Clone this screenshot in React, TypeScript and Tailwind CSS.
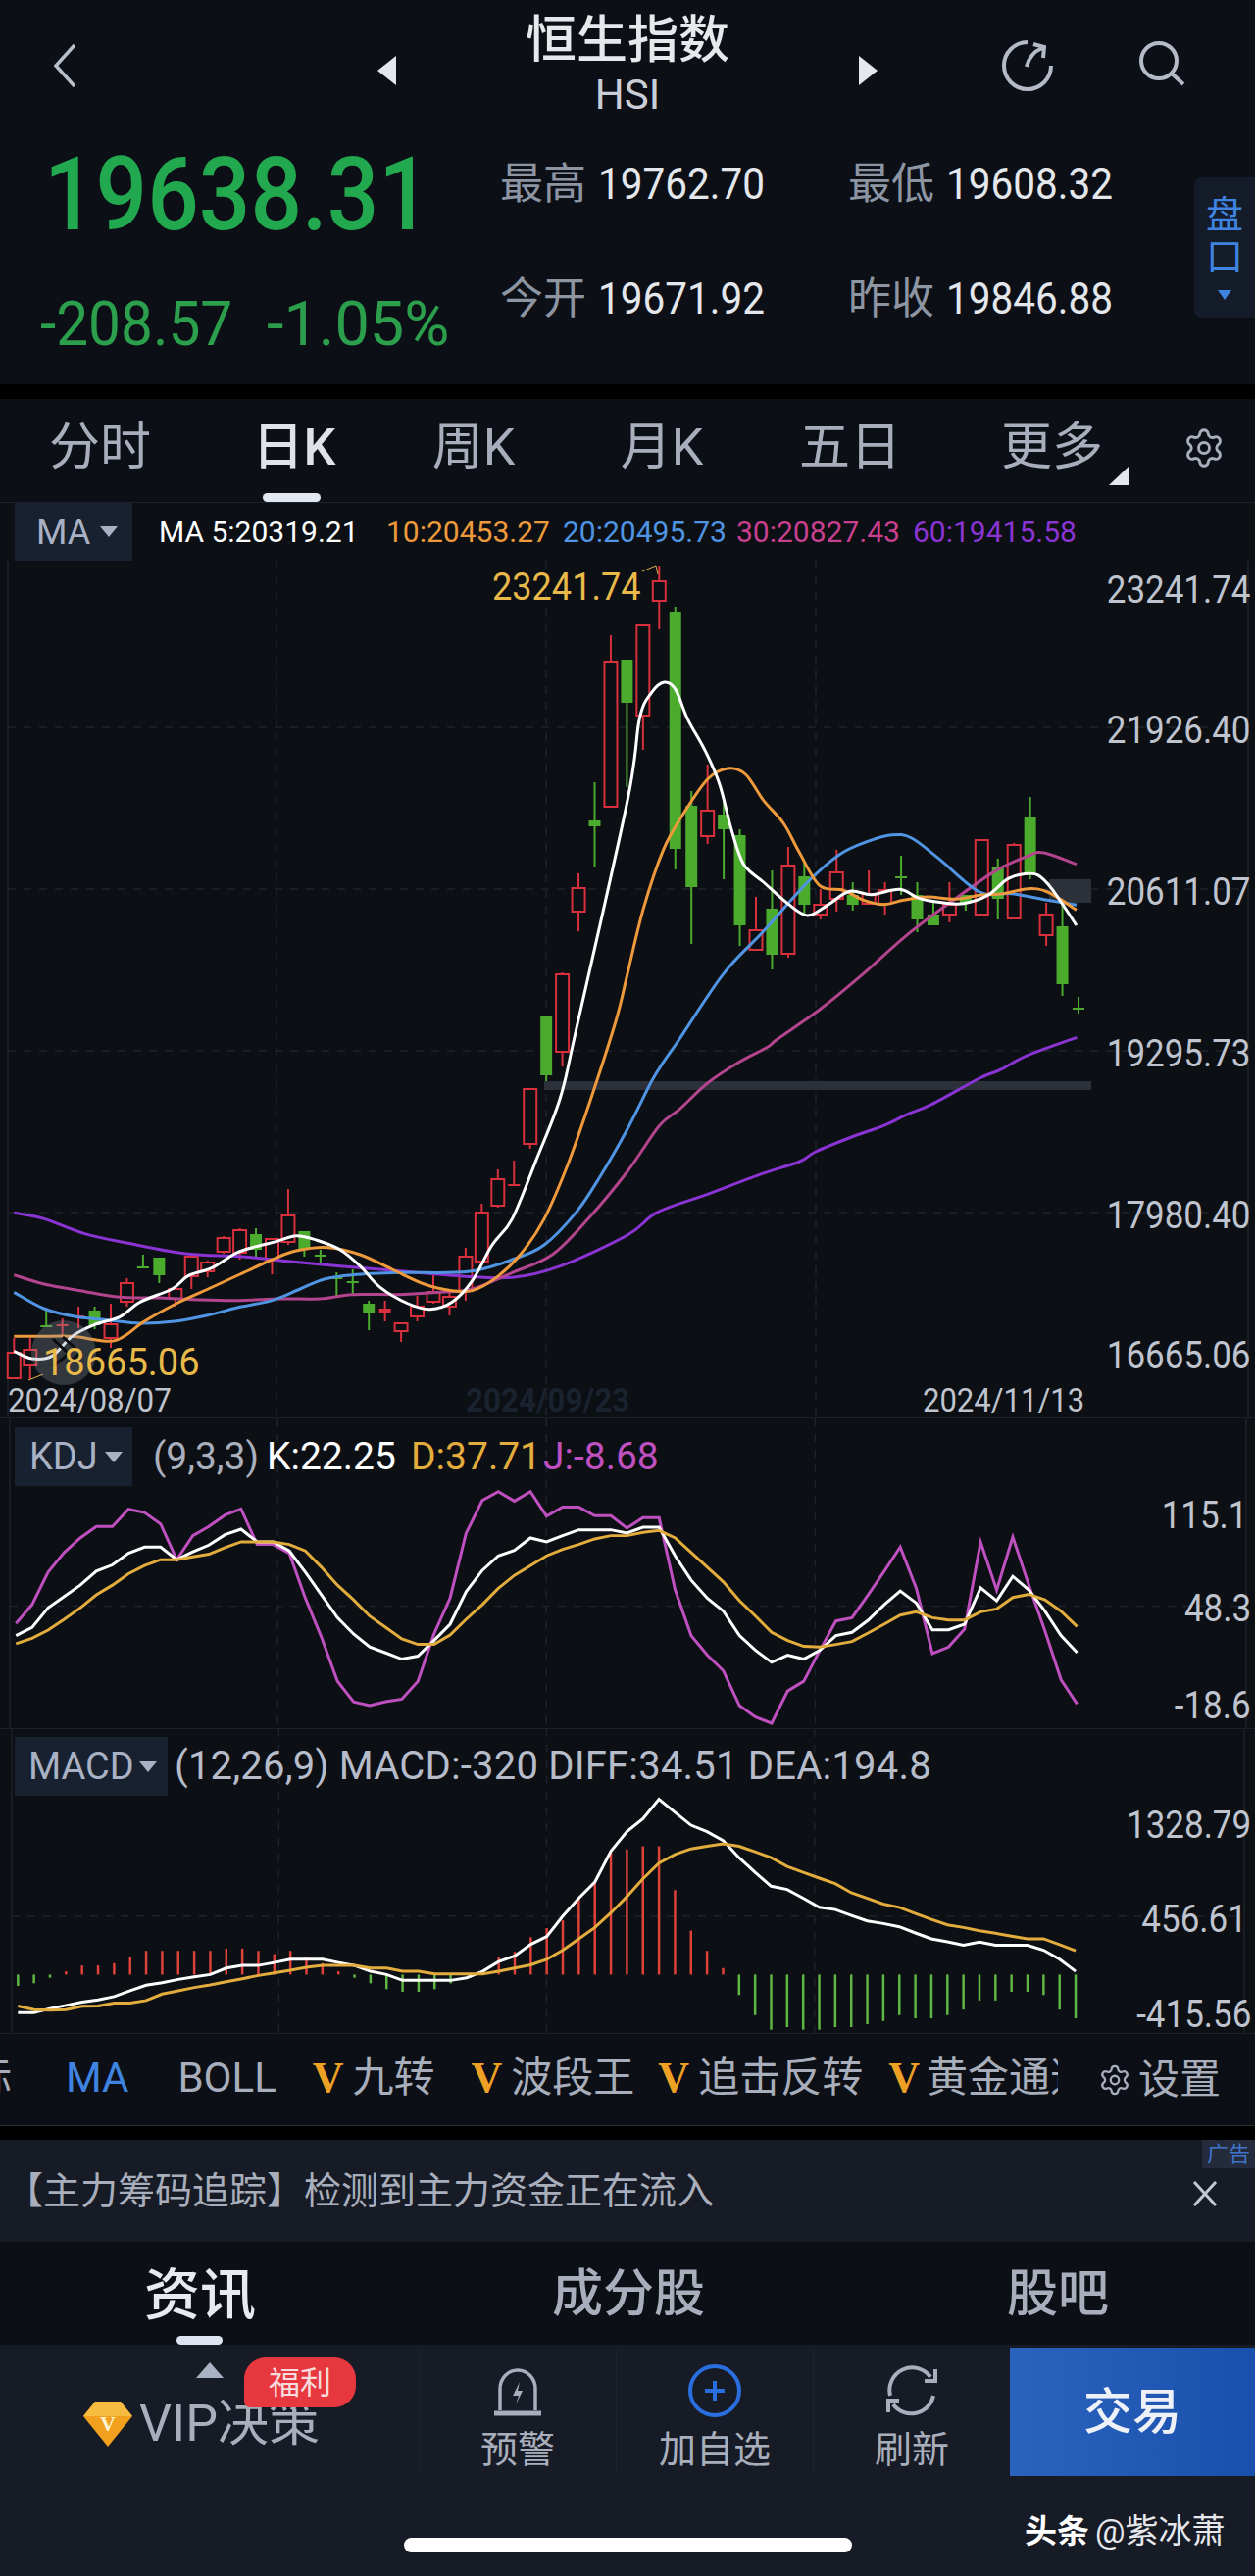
import { Settings } from 'lucide-react';

type P = [number, number];

const z3 = (a: number[]): P[] => pairs(a).map(([x, y]) => [640 + x / 2.45, 560 + y / 3]);
const z4 = (a: number[]): P[] => pairs(a).map(([x, y]) => [x / 2.45, 1040 + y / 3]);
const z5 = (a: number[]): P[] => pairs(a).map(([x, y]) => [640 + x / 2.45, 1040 + y / 3]);

function pairs(a: number[]): P[] {
  const out: P[] = [];
  for (let i = 0; i < a.length; i += 2) out.push([a[i], a[i + 1]]);
  return out;
}

const barX = (i: number) => 14.3 + 16.45 * i;

// catmull-rom through the traced points, the moving averages are smooth
function smooth(pts: P[]) {
  let d = `M${pts[0][0]} ${pts[0][1]}`;
  for (let i = 0; i < pts.length - 1; i++) {
    const p0 = pts[Math.max(i - 1, 0)];
    const p1 = pts[i];
    const p2 = pts[i + 1];
    const p3 = pts[Math.min(i + 2, pts.length - 1)];
    const c1x = p1[0] + (p2[0] - p0[0]) / 6;
    const c1y = p1[1] + (p2[1] - p0[1]) / 6;
    const c2x = p2[0] - (p3[0] - p1[0]) / 6;
    const c2y = p2[1] - (p3[1] - p1[1]) / 6;
    d += ` C${c1x} ${c1y} ${c2x} ${c2y} ${p2[0]} ${p2[1]}`;
  }
  return d;
}

const ma5 = [
  ...z4([35, 1015, 80, 1038, 130, 1030, 180, 970, 235, 935, 300, 910, 350, 865, 430, 825, 470, 785, 530, 760, 590, 715, 640, 695, 690, 680, 740, 662, 790, 675, 850, 705, 900, 755, 950, 820, 1020, 870, 1075, 887, 1130, 865, 1180, 800, 1230, 690, 1280, 610, 1340, 430, 1400, 240, 1440, 30]),
  ...z3([0, 770, 30, 520, 60, 440, 92, 408, 120, 430, 150, 520, 195, 620, 230, 720, 260, 860, 290, 965, 340, 1020, 400, 1085, 450, 1122, 500, 1090, 555, 1048, 610, 1058, 680, 1042, 730, 1070, 790, 1083, 840, 1085, 900, 1060, 950, 1010, 990, 995, 1025, 998, 1060, 1040, 1122, 1152]),
];
const ma10 = [
  ...z4([35, 970, 100, 970, 180, 970, 270, 985, 310, 970, 360, 925, 440, 870, 520, 825, 600, 780, 680, 735, 740, 708, 820, 698, 900, 720, 980, 765, 1060, 810, 1130, 830, 1180, 830, 1240, 790, 1300, 720, 1360, 610, 1420, 440, 1480, 230, 1540, 0]),
  ...z3([0, 1300, 40, 1100, 90, 920, 140, 810, 200, 705, 250, 672, 295, 690, 340, 770, 390, 840, 430, 930, 480, 1030, 540, 1045, 590, 1075, 640, 1088, 690, 1075, 750, 1065, 820, 1072, 880, 1060, 940, 1055, 1000, 1040, 1050, 1050, 1122, 1105]),
];
const ma20 = [
  ...z4([35, 835, 110, 885, 190, 910, 270, 920, 350, 930, 430, 925, 520, 905, 600, 880, 680, 860, 750, 825, 810, 795, 880, 782, 1000, 775, 1170, 772, 1280, 735, 1360, 690, 1440, 590, 1500, 480, 1568, 335]),
  ...z5([60, 190, 90, 130]),
  ...z3([130, 1500, 240, 1300, 340, 1170, 450, 1020, 530, 935, 600, 895, 660, 875, 710, 885, 780, 950, 880, 1050, 960, 1055, 1050, 1075, 1122, 1090]),
];
const ma30 = [
  ...z4([35, 782, 110, 810, 200, 830, 300, 850, 400, 852, 500, 858, 600, 860, 700, 855, 800, 855, 880, 842, 1000, 842, 1100, 835, 1180, 825, 1280, 775, 1380, 720, 1470, 610, 1568, 465]),
  ...z5([80, 325, 130, 275, 200, 195, 280, 130, 350, 85]),
  ...z3([375, 1500, 480, 1410, 580, 1310, 700, 1180, 820, 1070, 920, 985, 1000, 940, 1040, 930, 1122, 965]),
];
const ma60 = [
  ...z4([35, 592, 110, 610, 210, 655, 320, 685, 470, 718, 600, 725, 720, 740, 850, 755, 1000, 770, 1150, 785, 1280, 790, 1400, 755, 1568, 660]),
  ...z5([75, 590, 200, 535, 330, 475, 430, 435, 470, 405, 560, 360, 640, 325, 700, 290, 760, 260, 880, 180, 930, 155, 1000, 110, 1123, 55]),
];

// top, bottom, wick top, wick bottom, kind: r hollow red, R solid red, g solid green
const candles: [number, number, number, number, string][] = [
  [1380, 1406, 1365, 1406, 'r'], [1377, 1393, 1365, 1407, 'r'], [1352, 1354, 1335, 1354, 'g'], [1351, 1353, 1345, 1365, 'R'],
  [1342, 1344, 1333, 1355, 'R'], [1337, 1352, 1333, 1356, 'g'], [1351, 1365, 1330, 1375, 'r'], [1309, 1328, 1304, 1333, 'r'],
  [1292, 1294, 1280, 1294, 'g'], [1283, 1301, 1283, 1309, 'g'], [1315, 1325, 1313, 1333, 'r'], [1282, 1302, 1282, 1315, 'r'],
  [1288, 1297, 1286, 1303, 'r'], [1263, 1277, 1261, 1279, 'r'], [1255, 1278, 1253, 1285, 'r'], [1259, 1275, 1253, 1282, 'g'],
  [1264, 1285, 1263, 1300, 'r'], [1240, 1267, 1213, 1270, 'r'], [1256, 1275, 1256, 1282, 'g'], [1280, 1282, 1275, 1290, 'g'],
  [1303, 1305, 1298, 1322, 'g'], [1307, 1309, 1295, 1322, 'g'], [1330, 1339, 1327, 1357, 'g'], [1335, 1340, 1327, 1348, 'R'],
  [1350, 1358, 1350, 1369, 'r'], [1333, 1343, 1322, 1348, 'r'], [1318, 1328, 1300, 1330, 'r'], [1323, 1333, 1317, 1342, 'r'],
  [1282, 1317, 1273, 1327, 'r'], [1237, 1287, 1228, 1290, 'r'], [1203, 1230, 1193, 1232, 'r'], [1208, 1210, 1184, 1210, 'R'],
  [1111, 1167, 1111, 1172, 'r'], [1037, 1097, 1037, 1103, 'g'], [994, 1073, 992, 1088, 'r'], [906, 930, 891, 950, 'r'],
  [837, 843, 798, 885, 'g'], [675, 823, 648, 823, 'r'], [673, 717, 673, 803, 'g'], [638, 730, 638, 765, 'r'],
  [593, 613, 577, 642, 'r'], [624, 866, 619, 887, 'g'], [822, 905, 807, 963, 'g'], [827, 853, 780, 861, 'r'],
  [831, 846, 817, 897, 'g'], [852, 944, 846, 965, 'g'], [949, 969, 915, 969, 'r'], [927, 974, 888, 989, 'g'],
  [883, 973, 864, 977, 'r'], [894, 923, 879, 932, 'g'], [923, 933, 907, 938, 'r'], [890, 917, 867, 930, 'r'],
  [913, 923, 900, 929, 'g'], [912, 922, 888, 922, 'r'], [908, 922, 900, 933, 'r'], [894, 896, 873, 913, 'g'],
  [913, 938, 900, 951, 'g'], [933, 944, 918, 944, 'g'], [923, 933, 900, 941, 'r'], [913, 921, 913, 929, 'g'],
  [857, 933, 857, 933, 'r'], [885, 917, 876, 938, 'g'], [862, 937, 860, 938, 'r'], [834, 893, 813, 897, 'g'],
  [933, 954, 921, 965, 'r'], [945, 1004, 922, 1016, 'g'], [1028, 1030, 1017, 1034, 'g'],
];

const kdjJ = [648, 590, 490, 430, 385, 350, 350, 297, 307, 342, 452, 378, 350, 315, 296, 405, 405, 432, 570, 690, 825, 888, 900, 888, 880, 825, 680, 570, 370, 270, 243, 272, 243, 318, 290, 290, 317, 317, 355, 323, 323, 545, 685, 745, 793, 900, 935, 954, 855, 825, 730, 640, 630, 560, 488, 413, 540, 740, 720, 665, 398, 545, 382, 530, 670, 820, 895];
const kdjK = [685, 660, 600, 565, 530, 487, 468, 432, 413, 413, 452, 428, 407, 375, 358, 397, 397, 425, 490, 560, 630, 680, 720, 738, 757, 748, 700, 650, 550, 485, 440, 423, 385, 397, 378, 360, 360, 360, 370, 352, 352, 440, 515, 570, 610, 685, 730, 767, 745, 757, 730, 685, 675, 638, 590, 548, 585, 667, 667, 650, 538, 578, 503, 545, 610, 685, 737];
const kdjD = [710, 693, 668, 635, 600, 560, 530, 495, 470, 452, 452, 443, 435, 415, 397, 397, 397, 405, 425, 475, 530, 575, 625, 660, 695, 712, 712, 683, 635, 590, 540, 500, 470, 440, 420, 405, 388, 378, 378, 368, 362, 385, 430, 475, 520, 578, 625, 675, 700, 718, 720, 712, 703, 677, 650, 622, 612, 630, 637, 637, 612, 603, 568, 558, 575, 610, 657];
const diff = [942, 942, 930, 920, 910, 903, 893, 875, 858, 850, 840, 832, 825, 805, 797, 797, 788, 778, 778, 778, 788, 797, 815, 825, 843, 843, 843, 843, 835, 815, 785, 768, 732, 708, 645, 590, 540, 445, 385, 345, 285, 325, 365, 385, 412, 465, 510, 553, 563, 590, 618, 625, 643, 660, 668, 678, 697, 715, 724, 735, 725, 735, 735, 735, 750, 778, 815];
const dea = [922, 933, 935, 933, 923, 922, 913, 913, 905, 885, 875, 865, 857, 847, 838, 828, 820, 812, 803, 797, 797, 797, 805, 805, 815, 815, 823, 823, 823, 823, 815, 805, 795, 778, 750, 715, 680, 635, 585, 530, 482, 455, 438, 430, 422, 430, 447, 465, 492, 510, 528, 545, 573, 590, 608, 618, 637, 655, 672, 680, 690, 698, 707, 715, 715, 733, 752];
const hist = [860, 852, 835, 815, 797, 797, 790, 772, 752, 752, 752, 752, 752, 745, 745, 752, 762, 752, 772, 790, 815, 835, 852, 870, 878, 878, 870, 852, 825, 825, 772, 755, 710, 682, 658, 590, 540, 450, 440, 430, 430, 565, 690, 752, 805, 888, 950, 995, 987, 995, 995, 987, 987, 978, 968, 950, 960, 960, 950, 933, 905, 905, 878, 878, 888, 933, 960];

const kdjPts = (a: number[]) => a.map((v, i) => `${barX(i)},${1440 + v / 3}`).join(' ');
const macdPts = (a: number[]) => a.map((v, i) => `${barX(i)},${1740 + v / 3}`).join(' ');

function Grid({ ys, top, bottom }: { ys: number[]; top: number; bottom: number }) {
  return (
    <g stroke="#1e232b" strokeWidth="1.5">
      <line x1="8" y1={top} x2="8" y2={bottom} />
      <line x1="1273" y1={top} x2="1273" y2={bottom} />
      {ys.map((y) => (
        <line key={y} x1="8" y1={y} x2="1273" y2={y} strokeDasharray="8 8" />
      ))}
      {[282, 557, 832].map((x) => (
        <line key={x} x1={x} y1={top} x2={x} y2={bottom} strokeDasharray="8 8" />
      ))}
    </g>
  );
}

function MainChart() {
  return (
    <svg className="absolute inset-0 h-full w-full" viewBox="0 572 1280 874">
      <Grid ys={[742, 907, 1072, 1237]} top={572} bottom={1446} />
      <rect x="555" y="1103" width="558" height="9" fill="#2b3039" />
      <rect x="1070" y="897" width="43" height="24" fill="#2b3039" />
      {candles.map(([t, b, wt, wb, k], i) => {
        const x = barX(i);
        const c = k === 'g' ? '#4bab2c' : '#d8303c';
        return (
          <g key={i}>
            <line x1={x} y1={wt} x2={x} y2={wb} stroke={c} strokeWidth="2" />
            {k === 'r' ? (
              <rect x={x - 6.5} y={t} width="13" height={b - t} fill="#0c0f14" stroke={c} strokeWidth="2" />
            ) : (
              <rect x={x - 6} y={t} width="12" height={b - t} fill={c} />
            )}
          </g>
        );
      })}
      <path d={smooth(ma60)} fill="none" stroke="#8b34d4" strokeWidth="3" />
      <path d={smooth(ma30)} fill="none" stroke="#b3458f" strokeWidth="3" />
      <path d={smooth(ma20)} fill="none" stroke="#4f95e3" strokeWidth="3" />
      <path d={smooth(ma10)} fill="none" stroke="#ee9a3c" strokeWidth="3" />
      <path d={smooth(ma5)} fill="none" stroke="#ffffff" strokeWidth="3" />
      <polyline points="655,583 669,577 671,586" fill="none" stroke="#e5b04a" strokeWidth="1" />
      <polyline points="29,1408 44,1402" fill="none" stroke="#e5b04a" strokeWidth="1" />
      <circle cx="65" cy="1380" r="33" fill="#8a94a3" fillOpacity="0.3" />
      <path d="M54 1366 L70 1381 L54 1394 M64 1364 L82 1380 L68 1392" fill="none" stroke="#0b0d11" strokeWidth="3" />
    </svg>
  );
}

function KdjChart() {
  return (
    <svg className="absolute inset-0 h-full w-full" viewBox="0 1446 1280 317">
      <Grid ys={[1638]} top={1446} bottom={1763} />
      <polyline points={kdjPts(kdjJ)} fill="none" stroke="#bf50c0" strokeWidth="3" />
      <polyline points={kdjPts(kdjK)} fill="none" stroke="#ffffff" strokeWidth="3" />
      <polyline points={kdjPts(kdjD)} fill="none" stroke="#e3ad3e" strokeWidth="3" />
    </svg>
  );
}

function MacdChart() {
  return (
    <svg className="absolute inset-0 h-full w-full" viewBox="0 1763 1280 312">
      <Grid ys={[1955]} top={1763} bottom={2075} />
      {hist.map((v, i) => (
        <line
          key={i}
          x1={barX(i)}
          x2={barX(i)}
          y1={2015}
          y2={1740 + v / 3}
          stroke={v > 825 ? '#5fb744' : '#df4238'}
          strokeWidth="2.5"
        />
      ))}
      <polyline points={macdPts(diff)} fill="none" stroke="#ffffff" strokeWidth="3" />
      <polyline points={macdPts(dea)} fill="none" stroke="#e3ad3e" strokeWidth="3" />
    </svg>
  );
}

function Caret({ className }: { className: string }) {
  return <span className={`block h-0 w-0 border-x-[9px] border-t-[11px] border-x-transparent border-t-[#a9b2c4] ${className}`} />;
}

function GoldV({ className }: { className: string }) {
  return <span className={`font-['Liberation_Serif',serif] text-[44px] font-bold leading-none text-[#efa126] ${className}`}>V</span>;
}

export default function App() {
  return (
    <div className="flex h-[2628px] w-[1280px] flex-col overflow-hidden bg-black font-[Roboto,'Noto_Sans_CJK_SC',sans-serif]">
      {/* Quote header */}
      <header className="flex h-[392px] shrink-0 flex-col bg-[#0c1016]">
        <div className="flex h-[126px] shrink-0">
          <div className="w-[385px] pl-[53px] pt-[44px]">
            <svg width="26" height="46" viewBox="0 0 26 46" fill="none" stroke="#b9bfca" strokeWidth="3.5">
              <path d="M23 2 L4 23 L23 44" />
            </svg>
          </div>
          <span className="mt-[57px] h-0 w-0 border-y-[15px] border-r-[19px] border-y-transparent border-r-[#e4e8ee]" />
          <div className="flex w-[472px] flex-col items-center pt-[13px]">
            <span className="text-[52px] font-medium leading-[58px] text-[#e6e8ec]">恒生指数</span>
            <span className="mt-[7px] text-[42px] leading-[38px] text-[#c9ced8]">HSI</span>
          </div>
          <span className="mt-[57px] h-0 w-0 border-y-[15px] border-l-[19px] border-y-transparent border-l-[#e4e8ee]" />
          <svg className="ml-[126px] mt-[40px]" width="54" height="54" viewBox="0 0 54 54" fill="none" stroke="#b4bac6" strokeWidth="4">
            <path d="M27 3 A24 24 0 1 0 51 27" />
            <path d="M26 28 C28 20 32 13 42 9" />
            <path d="M33 5 L44 8 L43 19" />
          </svg>
          <svg className="ml-[85px] mt-[42px]" width="50" height="46" viewBox="0 0 50 46" fill="none" stroke="#b4bac6" strokeWidth="4">
            <circle cx="22" cy="20" r="18" />
            <path d="M35 33 L47 44" />
          </svg>
        </div>
        <div className="relative flex">
          <div className="w-[510px] shrink-0 pl-[41px]">
            <span className="ml-[4px] mt-[21px] block origin-left scale-x-[0.89] text-[104px] font-medium leading-[104px] text-[#22a94f]">19638.31</span>
            <div className="mt-[48px] flex text-[63px] leading-[63px] text-[#2b9f4c]">
              <span className="w-[231px] origin-left scale-x-[0.93]">-208.57</span>
              <span className="origin-left">-1.05%</span>
            </div>
          </div>
          <div className="grid grid-cols-[355px_1fr] content-start gap-y-[73px] pt-[40px] text-[#8d95a3]">
            <div className="flex h-[44px] items-center">
              <span className="w-[100px] text-[44px]">最高</span>
              <span className="origin-left scale-x-[0.92] text-[44px] text-[#e4e7ec]">19762.70</span>
            </div>
            <div className="flex h-[44px] items-center">
              <span className="w-[100px] text-[44px]">最低</span>
              <span className="origin-left scale-x-[0.92] text-[44px] text-[#e4e7ec]">19608.32</span>
            </div>
            <div className="flex h-[44px] items-center">
              <span className="w-[100px] text-[44px]">今开</span>
              <span className="origin-left scale-x-[0.92] text-[44px] text-[#e4e7ec]">19671.92</span>
            </div>
            <div className="flex h-[44px] items-center">
              <span className="w-[100px] text-[44px]">昨收</span>
              <span className="origin-left scale-x-[0.92] text-[44px] text-[#e4e7ec]">19846.88</span>
            </div>
          </div>
          <div className="absolute right-0 top-[55px] flex h-[143px] w-[62px] flex-col items-center rounded-l-[8px] bg-[#141b29] pt-[17px] text-[38px] leading-[43px] text-[#3f84e0]">
            <span>盘</span>
            <span>口</span>
            <span className="mt-[12px] h-0 w-0 border-x-[7px] border-t-[10px] border-x-transparent border-t-[#3f84e0]" />
          </div>
        </div>
      </header>
      <div className="h-[15px] shrink-0 bg-black" />

      {/* Period tabs */}
      <nav className="relative flex h-[105px] shrink-0 items-center bg-[#0c1016] pb-[5px] pl-[2px] text-[52px] leading-none text-[#a8aebb]">
        <span className="w-[200px] text-center">分时</span>
        <span className="w-[196px] text-center font-medium text-[#dfe2e8]">日K</span>
        <span className="w-[170px] text-center">周K</span>
        <span className="w-[214px] text-center">月K</span>
        <span className="w-[170px] text-center">五日</span>
        <span className="w-[242px] text-center">更多</span>
        <Settings className="ml-[12px] text-[#a8aebb]" size={44} strokeWidth={1.6} />
        <span className="absolute left-[1131px] top-[69px] h-0 w-0 border-b-[19px] border-l-[20px] border-b-[#e4e8ee] border-l-transparent" />
        <span className="absolute bottom-0 left-[268px] h-[9px] w-[59px] rounded-full bg-[#e3e7f0]" />
      </nav>

      {/* MA legend */}
      <div className="relative flex h-[60px] shrink-0 items-center border-t border-[#1c2129] bg-[#0c0f14] text-[30px] leading-none">
        <div className="ml-[15px] flex h-[60px] w-[120px] shrink-0 items-center bg-[#18212f] pl-[22px] text-[36px] text-[#a9b2c4]">
          <span>MA</span>
          <Caret className="ml-[10px]" />
        </div>
        <span className="ml-[27px] w-[232px] text-white">MA 5:20319.21</span>
        <span className="w-[180px] text-[#ee9a3c]">10:20453.27</span>
        <span className="w-[177px] text-[#4f95e3]">20:20495.73</span>
        <span className="w-[180px] text-[#c8408f]">30:20827.43</span>
        <span className="text-[#8b34d4]">60:19415.58</span>
      </div>

      {/* Candles */}
      <section className="relative h-[874px] shrink-0 bg-[#0c0f14] text-[38px] leading-none text-[#bfc4cf]">
        <MainChart />
        <span className="absolute left-[502px] top-[8px] origin-left scale-x-[0.95] text-[#e9b949]">23241.74</span>
        <span className="absolute left-[44px] top-[799px] text-[#e9b949]">18665.06</span>
        <span className="absolute right-[4px] top-[11px] origin-right scale-x-[0.92]">23241.74</span>
        <span className="absolute right-[4px] top-[154px] origin-right scale-x-[0.92]">21926.40</span>
        <span className="absolute right-[4px] top-[319px] origin-right scale-x-[0.92]">20611.07</span>
        <span className="absolute right-[4px] top-[484px] origin-right scale-x-[0.92]">19295.73</span>
        <span className="absolute right-[4px] top-[649px] origin-right scale-x-[0.92]">17980.40</span>
        <span className="absolute right-[4px] top-[792px] origin-right scale-x-[0.92]">16665.06</span>
        <span className="absolute left-[8px] top-[840px] origin-left scale-x-[0.95] text-[33px]">2024/08/07</span>
        <span className="absolute left-[475px] top-[840px] origin-left scale-x-[0.95] text-[33px] font-bold text-[#1a2230]">2024/09/23</span>
        <span className="absolute left-[941px] top-[840px] origin-left scale-x-[0.94] text-[33px]">2024/11/13</span>
      </section>

      {/* KDJ */}
      <section className="relative h-[317px] shrink-0 border-t border-[#1c2129] bg-[#0c0f14] text-[38px] leading-none text-[#bfc4cf]">
        <KdjChart />
        <div className="relative mt-[9px] flex h-[60px] items-center text-[39px]">
          <div className="ml-[15px] flex h-[60px] w-[120px] shrink-0 items-center bg-[#18212f] pl-[15px] text-[38px] text-[#a9b2c4]">
            <span>KDJ</span>
            <Caret className="ml-[7px]" />
          </div>
          <span className="ml-[21px] w-[116px] text-[#a9afbd]">(9,3,3)</span>
          <span className="w-[147px] text-white">K:22.25</span>
          <span className="w-[135px] text-[#e3ad3e]">D:37.71</span>
          <span className="text-[#bf50c0]">J:-8.68</span>
        </div>
        <span className="absolute right-[8px] top-[80px] origin-right scale-x-[0.92]">115.1</span>
        <span className="absolute right-[4px] top-[175px] origin-right scale-x-[0.92]">48.3</span>
        <span className="absolute right-[4px] top-[274px] origin-right scale-x-[0.92]">-18.6</span>
      </section>

      {/* MACD */}
      <section className="relative h-[312px] shrink-0 border-y border-[#1c2129] bg-[#0c0f14] text-[38px] leading-none text-[#bfc4cf]">
        <MacdChart />
        <div className="relative mt-[8px] flex h-[60px] items-center text-[40px]">
          <div className="ml-[15px] flex h-[60px] w-[156px] shrink-0 items-center bg-[#18212f] pl-[14px] text-[38px] text-[#a9b2c4]">
            <span>MACD</span>
            <Caret className="ml-[5px]" />
          </div>
          <span className="ml-[7px] whitespace-nowrap tracking-[0.2px] text-[#b6bcc9]">(12,26,9) MACD:-320 DIFF:34.51 DEA:194.8</span>
        </div>
        <span className="absolute right-[4px] top-[79px] origin-right scale-x-[0.92]">1328.79</span>
        <span className="absolute right-[8px] top-[175px] origin-right scale-x-[0.92]">456.61</span>
        <span className="absolute right-[4px] top-[272px] origin-right scale-x-[0.92]">-415.56</span>
      </section>

      {/* Indicator toolbar */}
      <div className="flex h-[94px] shrink-0 items-center border-b border-[#2a2e36] bg-[#0c1016] text-[42px] leading-none text-[#a8aebb]">
        <div className="flex w-[1079px] shrink-0 items-center overflow-hidden pb-[4px]">
          <span className="ml-[-30px] shrink-0">标</span>
          <span className="ml-[55px] shrink-0 text-[#3f84e0]">MA</span>
          <span className="ml-[50px] shrink-0">BOLL</span>
          <GoldV className="ml-[37px] shrink-0" />
          <span className="ml-[9px] shrink-0">九转</span>
          <GoldV className="ml-[37px] shrink-0" />
          <span className="ml-[9px] shrink-0">波段王</span>
          <GoldV className="ml-[24px] shrink-0" />
          <span className="ml-[9px] shrink-0">追击反转</span>
          <GoldV className="ml-[26px] shrink-0" />
          <span className="ml-[7px] shrink-0">黄金通道</span>
        </div>
        <Settings className="ml-[41px] shrink-0 text-[#a8aebb]" size={34} strokeWidth={1.6} />
        <span className="ml-[7px] shrink-0">设置</span>
      </div>
      <div className="h-[14px] shrink-0 bg-black" />

      {/* Ad strip */}
      <div className="relative flex h-[104px] shrink-0 items-center justify-between bg-[#171b26] pl-[6px] pr-[38px] text-[38px] text-[#a8aebb]">
        <span className="leading-none">【主力筹码追踪】检测到主力资金正在流入</span>
        <svg className="mt-[6px]" width="26" height="26" viewBox="0 0 26 26" stroke="#c3c8d2" strokeWidth="3">
          <path d="M2 1 L24 25 M24 1 L2 25" />
        </svg>
        <span className="absolute right-0 top-0 flex h-[29px] w-[54px] items-center justify-center bg-[#232b3d] text-[22px] leading-none text-[#3f74c8]">广告</span>
      </div>

      {/* Content tabs */}
      <div className="relative flex h-[105px] shrink-0 items-center bg-[#0c1016] pt-[3px] text-[52px] font-medium leading-none text-[#a8aebb]">
        <span className="ml-[147px] text-[57px] text-[#e8eaf0]">资讯</span>
        <span className="ml-[302px]">成分股</span>
        <span className="ml-[308px]">股吧</span>
        <span className="absolute bottom-0 left-[180px] h-[9px] w-[47px] rounded-full bg-[#dfe3f0]" />
      </div>

      {/* Action bar */}
      <div className="relative flex h-[236px] shrink-0 items-start bg-[#171b26] pt-[3px] text-[38px] leading-none text-[#a8aebb]">
        <div className="relative h-[131px] w-[427px] shrink-0">
          <span className="absolute left-[200px] top-[15px] h-0 w-0 border-x-[14px] border-b-[16px] border-x-transparent border-b-[#a9b2c4]" />
          <div className="flex items-center pl-[84px] pt-[52px]">
            <svg width="52" height="48" viewBox="0 0 52 48">
              <path d="M13 1 H39 L51 16 L26 47 L1 16 Z" fill="#f2a11e" />
              <path d="M13 1 H39 L51 16 H1 Z" fill="#f7bb3f" />
              <text x="26" y="31" textAnchor="middle" fontFamily="'Liberation Serif',serif" fontSize="22" fontWeight="700" fill="#fff3d0">V</text>
            </svg>
            <span className="ml-[6px] text-[52px]">VIP决策</span>
          </div>
          <span className="absolute left-[249px] top-[10px] flex h-[51px] w-[114px] items-center justify-center rounded-[22px] rounded-bl-[6px] bg-[#e8383f] text-[32px] text-[#f6dcdc]">福利</span>
        </div>
        <div className="flex h-[131px] w-[201px] shrink-0 flex-col items-center border-l border-[#1c212c] pt-[20px]">
          <svg width="56" height="52" viewBox="0 0 56 52" fill="none" stroke="#a8aebb" strokeWidth="3.5">
            <path d="M10 44 V22 A18 19 0 0 1 46 22 V44" />
            <path d="M4 47 H52" strokeWidth="5" />
            <path d="M30 15 L23 29 H29 L26 38 L33 24 H28 Z" fill="#a8aebb" stroke="none" />
          </svg>
          <span className="mt-[13px]">预警</span>
        </div>
        <div className="flex h-[131px] w-[201px] shrink-0 flex-col items-center border-l border-[#1c212c] pt-[17px]">
          <svg width="54" height="54" viewBox="0 0 54 54" fill="none" stroke="#2a6fe0" strokeWidth="4">
            <circle cx="27" cy="27" r="25" />
            <path d="M27 17 V37 M17 27 H37" />
          </svg>
          <span className="mt-[14px]">加自选</span>
        </div>
        <div className="flex h-[131px] w-[201px] shrink-0 flex-col items-center border-l border-[#1c212c] pt-[17px]">
          <svg width="56" height="54" viewBox="0 0 56 54" fill="none" stroke="#a8aebb" strokeWidth="4">
            <path d="M6 32 A23 23 0 0 1 47 13" />
            <path d="M50 32 A23 23 0 0 1 9 41" />
            <path d="M41 17 H52 V5" fill="none" />
            <path d="M15 37 H4 V49" fill="none" />
          </svg>
          <span className="mt-[14px]">刷新</span>
        </div>
        <div className="flex h-[131px] w-[250px] shrink-0 items-center justify-center bg-gradient-to-r from-[#2a63bd] to-[#1a50ad] text-[50px] font-medium text-[#eef2f8]">交易</div>
        <span className="absolute bottom-[29px] left-[1045px] flex items-center text-[#e6e8ec]">
          <span className="text-[33px] font-bold leading-none text-white">头条</span>
          <span className="ml-[6px] text-[34px] leading-none">@紫冰萧</span>
        </span>
        <span className="absolute bottom-[24px] left-[412px] h-[15px] w-[457px] rounded-full bg-white" />
      </div>
    </div>
  );
}
